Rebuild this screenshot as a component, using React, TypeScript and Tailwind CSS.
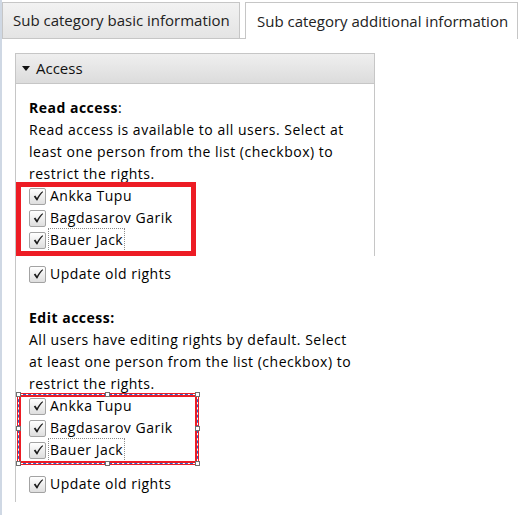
import { ReactNode } from 'react'

const Check = () => (
  <span className="flex h-[17px] w-[17px] shrink-0 items-center justify-center rounded-[2px] border border-[#a3a3a3] bg-linear-to-b from-white to-[#dedede]">
    <svg viewBox="0 0 12 12" className="h-[12px] w-[12px]">
      <path
        d="M1.8 6.6 L3.3 5.6 L5 8.1 C6.6 5.1 8.3 3 10.6 1.3 L11.1 1.9 C8.9 4 7.1 6.6 5.4 10.6 L4.6 10.6 Z"
        fill="#1c1c1c"
      />
    </svg>
  </span>
)

const Row = ({ children, focused }: { children: ReactNode; focused?: boolean }) => (
  <label className="flex h-[22px] items-center gap-[4px]">
    <Check />
    <span
      className={
        focused
          ? 'leading-[20px] outline-1 outline-offset-1 outline-dotted outline-[#8a8a8a]'
          : 'leading-[20px]'
      }
    >
      {children}
    </span>
  </label>
)

const Handle = ({ className }: { className: string }) => (
  <span className={`absolute h-[5px] w-[5px] border border-[#6f6f6f] bg-white ${className}`} />
)

export default function App() {
  return (
    <div
      className="relative h-[515px] w-[526px] overflow-hidden border-l-2 border-[#cfd8e4] bg-white text-black"
      style={{ fontFamily: '"Open Sans", "DejaVu Sans", sans-serif' }}
    >
      {/* tabs */}
      <div className="flex pt-[2px] text-[15px] text-[#222]">
        <div className="flex border-b border-[#c6c6c6] pr-[5px]">
          <div className="flex h-[36px] w-[238px] items-center border border-b-0 border-[#c6c6c6] bg-linear-to-b from-[#f2f2f2] to-[#e4e4e4] pl-[10px]">
            Sub category basic information
          </div>
        </div>
        <div className="flex h-[37px] w-[273px] items-center border border-b-0 border-[#c6c6c6] bg-white pl-[11px]">
          Sub category additional information
        </div>
      </div>

      {/* panel */}
      <div className="ml-[13px] mt-[14px] w-[360px]">
        <div className="flex h-[31px] items-center gap-[6px] border border-[#c6c6c6] bg-linear-to-b from-[#efefef] to-[#dcdcdc] pl-[6px] text-[15px] text-[#111]">
          <svg viewBox="0 0 8 6" className="h-[6px] w-[8px]">
            <path d="M0 0 H8 L4 5 Z" fill="#111" />
          </svg>
          Access
        </div>

        <div className="border-x border-[#c6c6c6] pb-[5px] pl-[13px] pt-[13px] text-[14px] leading-[22px] tracking-[0.5px]">
          <p>
            <b>Read access</b>:
          </p>
          <p className="w-[330px]">
            Read access is available to all users. Select at least one person from the list (checkbox) to restrict
            the rights.
          </p>
          <Row>Ankka Tupu</Row>
          <Row>Bagdasarov Garik</Row>
          <Row focused>Bauer Jack</Row>
        </div>

        <div className="border-l border-[#c6c6c6] pb-[7px] pl-[13px] pt-[7px] text-[14px] leading-[22px] tracking-[0.5px]">
          <Row>Update old rights</Row>
          <p className="mt-[22px]">
            <b>Edit access:</b>
          </p>
          <p className="w-[330px]">
            All users have editing rights by default. Select at least one person from the list (checkbox) to
            restrict the rights.
          </p>
          <Row>Ankka Tupu</Row>
          <Row>Bagdasarov Garik</Row>
          <Row focused>Bauer Jack</Row>
          <div className="mt-[12px]">
            <Row>Update old rights</Row>
          </div>
        </div>
      </div>

      {/* annotation boxes */}
      <div className="absolute left-[14px] top-[182px] h-[74px] w-[180px] border-[5px] border-[#ed1c24]" />

      <div className="absolute left-[15px] top-[393px] h-[72px] w-[182px] border-[4px] border-[#ed1c24]">
        <div className="absolute -inset-[3px] border border-white" />
        <div className="absolute -inset-[3px] border border-dashed border-[#2f63c6]" />
        <Handle className="-left-[5px] -top-[5px]" />
        <Handle className="left-[84px] -top-[5px]" />
        <Handle className="-right-[5px] -top-[5px]" />
        <Handle className="-left-[5px] top-[29px]" />
        <Handle className="-right-[5px] top-[29px]" />
        <Handle className="-bottom-[5px] -left-[5px]" />
        <Handle className="-bottom-[5px] left-[84px]" />
        <Handle className="-bottom-[5px] -right-[5px]" />
      </div>
    </div>
  )
}
